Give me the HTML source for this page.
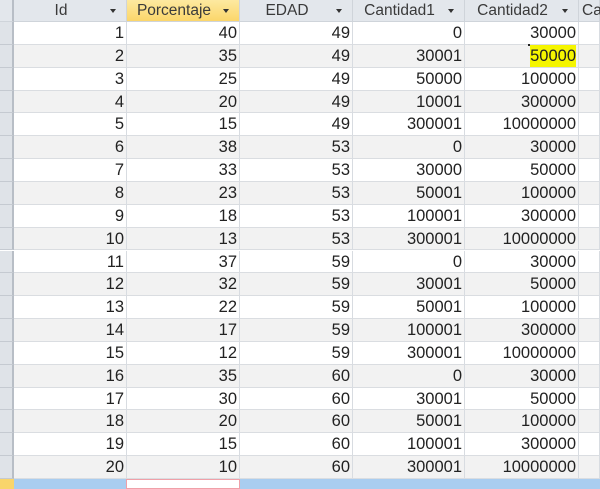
<!DOCTYPE html>
<html><head><meta charset="utf-8"><style>
html,body{margin:0;padding:0;width:600px;height:486px;overflow:hidden;background:#fff;font-family:"Liberation Sans",sans-serif;}
.c{position:absolute;box-sizing:border-box;font-size:16.5px;color:#222;}
#g{position:absolute;left:0;top:0;width:600px;height:486px;}
.h{height:22px;top:0;background:#e3e7ec;border-right:1px solid #cfd4da;border-bottom:1px solid #cfd4da;color:#3a3a3a;text-align:center;line-height:22px;font-size:15.5px;padding-right:18px;}
.h.y{background:linear-gradient(#fde9a0,#fbd66a);}
.h i{position:absolute;right:10px;top:9px;width:0;height:0;border-left:3.5px solid transparent;border-right:3.5px solid transparent;border-top:4px solid #333;}
.r{border-right:1px solid #d8dce1;border-bottom:1px solid #dadde1;text-align:right;padding-right:2px;}
.sel{left:0;width:14px;background:#dfe3e8;border-right:2px solid #b8bec6;border-bottom:1px solid #c5cad1;}
</style></head><body><div id="g"></div>
<script>
var g=document.getElementById('g');
var cols=[[14,127],[127,240],[240,353],[353,465],[465,579],[579,600]];
var names=['Id','Porcentaje','EDAD','Cantidad1','Cantidad2','Ca'];
var h='<div class="c h" style="left:0;width:14px;padding:0;border-right:2px solid #b8bec6"></div>';
cols.forEach(function(c,i){h+='<div class="c h'+(i==1?' y':'')+'" style="left:'+c[0]+'px;width:'+(c[1]-c[0])+'px;'+(i==5?'text-align:left;padding:0 0 0 3px':'')+'">'+names[i]+(i<5?'<i></i>':'')+'</div>';});
var data=[[40,49,0,30000],[35,49,30001,50000],[25,49,50000,100000],[20,49,10001,300000],[15,49,300001,10000000],[38,53,0,30000],[33,53,30000,50000],[23,53,50001,100000],[18,53,100001,300000],[13,53,300001,10000000],[37,59,0,30000],[32,59,30001,50000],[22,59,50001,100000],[17,59,100001,300000],[12,59,300001,10000000],[35,60,0,30000],[30,60,30001,50000],[20,60,50001,100000],[15,60,100001,300000],[10,60,300001,10000000]];
var RH=22.85;
data.forEach(function(d,k){
 var top=22+k*RH,bg=(k%2)?'#f2f2f2':'#fff';
 var vals=[k+1,d[0],d[1],d[2],d[3],''];
 h+='<div class="c sel" style="top:'+top+'px;height:'+RH+'px"></div>';
 cols.forEach(function(c,i){
  var v=vals[i];
  if(k==1&&i==4)v='<span style="background:#f5f500;padding:2px 0">50000</span>';
  h+='<div class="c r" style="left:'+c[0]+'px;width:'+(c[1]-c[0])+'px;top:'+top+'px;height:'+RH+'px;line-height:'+RH+'px;background:'+bg+'">'+v+'</div>';
 });
});
var bt=22+20*RH;
h+='<div class="c" style="left:0;top:'+bt+'px;width:600px;height:10px;background:#a9cdf0"></div>';
h+='<div class="c" style="left:0;top:'+bt+'px;width:14px;height:10px;background:#f9d56b"></div>';
h+='<div class="c" style="left:126px;top:'+bt+'px;width:114px;height:10px;background:#fff;border:1px solid #f0a0a8"></div>';
h+='<div class="c" style="left:528px;top:44px;width:2px;height:2px;background:#222"></div>';
g.innerHTML=h;
</script></body></html>
